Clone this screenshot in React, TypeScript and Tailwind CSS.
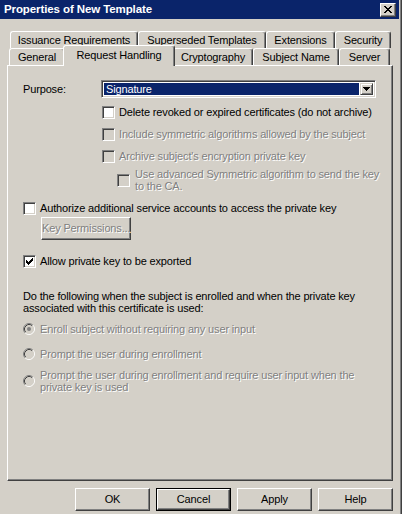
import React from "react";

const FONT = "[font-family:'Liberation_Sans',Arial,sans-serif]";
const raised =
  "border border-t-white border-l-white border-r-[#404040] border-b-[#404040] shadow-[inset_-1px_-1px_0_#808080]";
const dis = "text-[#808080] [text-shadow:1px_1px_0_#ffffff]";

function Box({ checked, disabled }: { checked?: boolean; disabled?: boolean }) {
  return (
    <span
      className={`shrink-0 w-[13px] h-[13px] border border-t-[#808080] border-l-[#808080] border-r-white border-b-white shadow-[inset_1px_1px_0_#404040,inset_-1px_-1px_0_#d4d0c8] flex items-center justify-center ${
        disabled ? "bg-[#d4d0c8]" : "bg-white"
      }`}
    >
      {checked && (
        <svg width="7" height="7" viewBox="0 0 7 7" shapeRendering="crispEdges">
          <path
            d="M6 0h1v1h-1z M5 1h2v1h-2z M0 2h1v1h-1z M4 2h3v1h-3z M0 3h2v1h-2z M3 3h3v1h-3z M0 4h5v1h-5z M1 5h3v1h-3z M2 6h1v1h-1z"
            fill="#000"
          />
        </svg>
      )}
    </span>
  );
}

function RadioDot({ checked }: { checked?: boolean }) {
  return (
    <svg width="12" height="12" viewBox="0 0 12 12" className="shrink-0">
      <circle cx="6" cy="6" r="4.5" fill="#d4d0c8" />
      <path d="M9.89 2.11 A5.5 5.5 0 0 0 2.11 9.89" stroke="#808080" fill="none" />
      <path d="M2.11 9.89 A5.5 5.5 0 0 0 9.89 2.11" stroke="#ffffff" fill="none" />
      <path d="M9.18 2.82 A4.5 4.5 0 0 0 2.82 9.18" stroke="#404040" fill="none" />
      <path d="M2.82 9.18 A4.5 4.5 0 0 0 9.18 2.82" stroke="#d4d0c8" fill="none" />
      {checked && <circle cx="6" cy="6" r="2" fill="#808080" />}
    </svg>
  );
}

function Tab({ label, w, selected }: { label: string; w: string; selected?: boolean }) {
  return (
    <div
      className={`${w} ${
        selected ? "relative z-10 h-[21px] -mt-[3px] -mx-[2px] pb-[2px]" : "h-[17px]"
      } bg-[#d4d0c8] border-l border-t border-r border-l-white border-t-white border-r-[#404040] rounded-t-[3px] shadow-[inset_-1px_0_0_#808080] flex items-center justify-center whitespace-nowrap`}
    >
      {label}
    </div>
  );
}

function Btn({ label, isDefault }: { label: string; isDefault?: boolean }) {
  return (
    <div className={`w-[75px] h-[23px] ${isDefault ? "border border-black" : ""} flex`}>
      <div className={`flex-1 ${raised} flex items-center justify-center`}>{label}</div>
    </div>
  );
}

export default function App() {
  return (
    <div className={`w-[402px] h-[514px] bg-[#d4d0c8] flex overflow-hidden text-[11px] tracking-[-0.15px] text-black ${FONT}`}>
      <div className="w-[400px] flex flex-col">
        {/* title bar */}
        <div className="h-[19px] mr-[1px] bg-[#0a246a] flex items-center pl-[4px] pr-[3px]">
          <span className="text-white font-bold text-[11.5px] tracking-[-0.1px]">Properties of New Template</span>
          <div className={`ml-auto w-[16px] h-[14px] bg-[#d4d0c8] ${raised} flex items-center justify-center`}>
            <svg width="8" height="7" viewBox="0 0 8 7" shapeRendering="crispEdges">
              <path
                d="M0 0h2v1h-2z M6 0h2v1h-2z M1 1h2v1h-2z M5 1h2v1h-2z M2 2h4v1h-4z M3 3h2v1h-2z M2 4h4v1h-4z M1 5h2v1h-2z M5 5h2v1h-2z M0 6h2v1h-2z M6 6h2v1h-2z"
                fill="#000"
              />
            </svg>
          </div>
        </div>

        {/* tabs row 1 */}
        <div className="mt-[12px] pl-[10px] flex h-[17px]">
          <Tab label="Issuance Requirements" w="w-[128px]" />
          <Tab label="Superseded Templates" w="w-[128px]" />
          <Tab label="Extensions" w="w-[69px]" />
          <Tab label="Security" w="w-[56px]" />
        </div>
        {/* tabs row 2 */}
        <div className="pl-[9px] flex items-start h-[17px]">
          <Tab label="General" w="w-[56px]" />
          <Tab label="Request Handling" w="w-[112px]" selected />
          <Tab label="Cryptography" w="w-[80px]" />
          <Tab label="Subject Name" w="w-[86px]" />
          <Tab label="Server" w="w-[51px]" />
        </div>

        {/* panel */}
        <div className="ml-[7px] w-[386px] h-[416px] border border-t-white border-l-white border-r-[#404040] border-b-[#404040] shadow-[inset_-1px_-1px_0_#808080] flex flex-col">
          <div className="mt-[14px] h-[18px] flex items-center">
            <span className="ml-[15px] w-[78px]">Purpose:</span>
            <div className="w-[275px] h-[18px] border border-t-[#808080] border-l-[#808080] border-r-white border-b-white shadow-[inset_1px_1px_0_#404040,inset_-1px_-1px_0_#d4d0c8] bg-white flex p-[2px]">
              <div className="flex-1 bg-[#0a246a] text-white pl-[2px] flex items-center mr-[1px]">Signature</div>
              <div className="w-[13px] bg-[#d4d0c8] border border-t-[#d4d0c8] border-l-[#d4d0c8] border-r-[#404040] border-b-[#404040] shadow-[inset_1px_1px_0_#ffffff,inset_-1px_-1px_0_#808080] flex items-center justify-center">
                <svg width="7" height="4" viewBox="0 0 7 4" shapeRendering="crispEdges">
                  <path d="M0 0h7v1h-7z M1 1h5v1h-5z M2 2h3v1h-3z M3 3h1v1h-1z" fill="#000" />
                </svg>
              </div>
            </div>
          </div>

          <div className="mt-[7px] h-[14px] ml-[94px] flex items-center gap-[4px]">
            <Box />
            <span className="whitespace-nowrap">Delete revoked or expired certificates (do not archive)</span>
          </div>
          <div className="mt-[8px] h-[14px] ml-[94px] flex items-center gap-[4px]">
            <Box disabled />
            <span className={`whitespace-nowrap ${dis}`}>Include symmetric algorithms allowed by the subject</span>
          </div>
          <div className="mt-[8px] h-[14px] ml-[94px] flex items-center gap-[4px]">
            <Box disabled />
            <span className={`whitespace-nowrap ${dis}`}>Archive subject's encryption private key</span>
          </div>
          <div className="mt-[5px] ml-[109px] flex items-center gap-[5px]">
            <Box disabled />
            <span className={`whitespace-nowrap leading-[12px] ${dis}`}>
              Use advanced Symmetric algorithm to send the key
              <br />
              to the CA.
            </span>
          </div>

          <div className="mt-[9px] h-[14px] ml-[15px] flex items-center gap-[4px]">
            <Box />
            <span className="whitespace-nowrap">Authorize additional service accounts to access the private key</span>
          </div>
          <div className="mt-[2px] ml-[33px] w-[90px] h-[23px] flex">
            <div className={`flex-1 ${raised} flex items-center justify-center whitespace-nowrap ${dis}`}>Key Permissions...</div>
          </div>

          <div className="mt-[14px] h-[14px] ml-[15px] flex items-center gap-[4px]">
            <Box checked />
            <span className="whitespace-nowrap">Allow private key to be exported</span>
          </div>

          <div className="mt-[22px] ml-[15px] leading-[12px] whitespace-nowrap">
            Do the following when the subject is enrolled and when the private key
            <br />
            associated with this certificate is used:
          </div>

          <div className="mt-[8px] h-[14px] ml-[15px] flex items-center gap-[5px]">
            <RadioDot checked />
            <span className={`whitespace-nowrap ${dis}`}>Enroll subject without requiring any user input</span>
          </div>
          <div className="mt-[11px] h-[14px] ml-[15px] flex items-center gap-[5px]">
            <RadioDot />
            <span className={`whitespace-nowrap ${dis}`}>Prompt the user during enrollment</span>
          </div>
          <div className="mt-[8px] ml-[15px] flex items-center gap-[5px]">
            <RadioDot />
            <span className={`whitespace-nowrap leading-[12px] ${dis}`}>
              Prompt the user during enrollment and require user input when the
              <br />
              private key is used
            </span>
          </div>
        </div>

        {/* buttons */}
        <div className="mt-[7px] flex justify-end gap-[6px] pr-[7px]">
          <Btn label="OK" />
          <Btn label="Cancel" isDefault />
          <Btn label="Apply" />
          <Btn label="Help" />
        </div>
      </div>
      <div className="w-[1px] bg-[#808080]" />
      <div className="w-[1px] bg-[#404040]" />
    </div>
  );
}
